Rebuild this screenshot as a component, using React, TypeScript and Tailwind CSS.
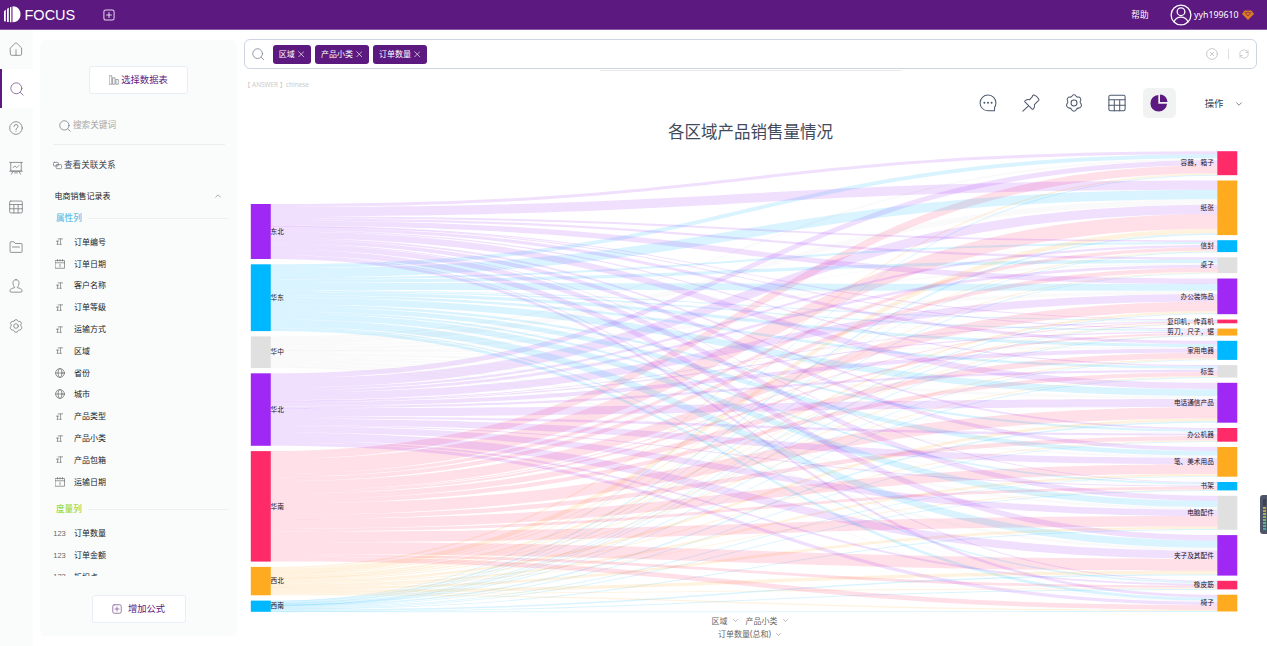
import React from "react";

type IconProps = { className?: string; children?: React.ReactNode };

function Icon({ className = "", children }: IconProps) {
  return (
    <svg
      viewBox="0 0 20 20"
      fill="none"
      stroke="currentColor"
      strokeWidth={1.15}
      strokeLinecap="round"
      strokeLinejoin="round"
      className={`shrink-0 ${className}`}
    >
      {children}
    </svg>
  );
}

const gear = (
  <>
    <path d="M7.6 2.6 Q8.2 .9 10 .9 Q11.800 .9 12.4 2.6 Q13 3.700 14.300 3.400 Q16 3 17 4.500 Q18.200 6.200 17.200 7.600 Q16.200 8.800 17.200 10 L17.700 10.700 Q18.800 12.300 17.900 14 Q17 15.700 15.200 15.700 Q13.400 15.600 12.900 16.900 Q12.200 19.100 10 19.100 Q7.800 19.100 7.100 16.900 Q6.600 15.600 4.800 15.700 Q3 15.700 2.100 14 Q1.200 12.300 2.300 10.700 L2.800 10 Q3.800 8.800 2.800 7.600 Q1.800 6.200 3 4.500 Q4 3 5.700 3.400 Q7 3.700 7.600 2.600 Z" />
    <circle cx="10" cy="10" r="3.3" />
  </>
);
const tableShape = (
  <>
    <rect x="1" y="1.500" width="18" height="17" rx="1.500" />
    <path d="M1 6.500H19M1 12.500H19M7 6.500V18.500M13 6.500V18.500" />
  </>
);
const lens = (
  <>
    <circle cx="9" cy="9" r="7.800" />
    <path d="M14.800 15 L18.800 18.800" />
  </>
);

function Lens({ className }: IconProps) {
  return <Icon className={className}>{lens}</Icon>;
}
function Chevron({ className, up = false }: { className?: string; up?: boolean }) {
  return (
    <Icon className={className}>
      <path strokeWidth={2.400} d={up ? "M2 14 L10 6 L18 14" : "M2 6 L10 14 L18 6"} />
    </Icon>
  );
}
function PlusBox({ className }: IconProps) {
  return (
    <Icon className={className}>
      <rect x="1.500" y="1.500" width="17" height="17" rx="3" strokeWidth={1.700} />
      <path strokeWidth={1.700} d="M10 6V14M6 10H14" />
    </Icon>
  );
}

const railIcons: { name: string; shape: React.ReactNode }[] = [
  { name: "home", shape: <path d="M2 8.500 L8.800 1.800 Q10 .800 11.200 1.800 L18 8.500 V17.500 Q18 19 16.500 19 H3.500 Q2 19 2 17.500 Z M10 11V19" /> },
  { name: "search", shape: lens },
  {
    name: "help",
    shape: (
      <>
        <circle cx="10" cy="10" r="9" />
        <path d="M7 8 Q7 5 10 5 Q13 5 13 7.700 Q13 9.300 11.200 10.200 Q10 10.900 10 12.300 M10 14.500V14.800" />
      </>
    ),
  },
  { name: "board", shape: <path d="M1 2H19M2.500 2V14.500H17.500V2M6 9.500L8.500 7L11 9.500L14 6.500M1 14.500H19M6 14.500L3.500 18.800M14 14.500L16.500 18.800M8 17H12" /> },
  { name: "table", shape: tableShape },
  { name: "folder", shape: <path d="M1.500 3.500 Q1.500 2.500 2.500 2.500 H6.800 L9 5 H17.500 Q18.700 5 18.700 6 V16.500 Q18.700 17.700 17.500 17.700 H2.700 Q1.500 17.700 1.500 16.500 Z M5 10H15" /> },
  { name: "user", shape: <path d="M10 1 C7 1 5.700 3 5.700 5.500 C5.700 8 6.500 10 8 11.500 V12.500 C5 13.200 1.300 13.500 1.300 17 Q1.300 18.800 3 18.800 H17 Q18.700 18.800 18.700 17 C18.700 13.500 15 13.200 12 12.500 V11.500 C13.500 10 14.300 8 14.300 5.500 C14.300 3 13 1 10 1 Z" /> },
  { name: "settings", shape: gear },
];

function Header() {
  return (
    <header className="flex h-[30px] shrink-0 items-center border-b border-[#8a59a3] bg-[#5c197f] text-white">
      <svg viewBox="0 0 17 17" className="ml-[3.500px] h-[17px] w-[17px]" fill="#fff">
        <path d="M0 5.500Q.900 4 1.800 3.800V15.500H.900Q0 15.500 0 14.800ZM3 3Q3.900 2 4.800 1.800V16H3ZM6 1.300L7.400 .700V16.300H6ZM8.500 .300C13.500 .300 16.500 3.800 16.500 8.300S13.500 16.300 8.500 16.300Z" />
      </svg>
      <span className="ml-[4px] w-[51px] pt-px font-['Liberation_Sans',sans-serif] text-[14.500px] leading-none">FOCUS</span>
      <PlusBox className="ml-[27px] h-[12px] w-[12px] text-[#e3d3ec]" />
      <div className="ml-auto flex items-center pr-[13px]">
        <span className="pt-px text-[8.600px]">帮助</span>
        <Icon className="ml-[21px] h-[22px] w-[22px]">
          <circle cx="10" cy="10" r="9" />
          <circle cx="10" cy="7" r="3.500" />
          <path d="M3.800 16 Q5.500 12 10 12 Q14.500 12 16.200 16" />
        </Icon>
        <span className="ml-[2.500px] w-[46px] pt-[2px] text-[8.800px]">yyh199610</span>
        <svg viewBox="0 0 12 10" className="ml-[2px] mt-px h-[10px] w-[12px]">
          <path d="M2.500 .500H9.500L12 4L6 10L0 4Z" fill="#dc7a24" />
          <path d="M3.200 2.800Q6 1.600 8.800 2.800L6 6Z" fill="none" stroke="#7c3250" strokeWidth=".8" />
        </svg>
      </div>
    </header>
  );
}

function Rail() {
  return (
    <nav className="flex w-[33px] shrink-0 flex-col bg-[#fafcfb]">
      {railIcons.map((item) => (
        <div
          key={item.name}
          className={`flex shrink-0 items-center justify-center border-l-2 pr-[2px] ${
            item.name === "home" ? "h-[38.800px]" : "h-[39.550px]"
          } ${
            item.name === "search" ? "border-[#5c197f] bg-white text-[#7b5590]" : "border-transparent pr-[3px] text-[#777b80]"
          }`}
        >
          <Icon className="h-[14px] w-[14px]">{item.shape}</Icon>
        </div>
      ))}
    </nav>
  );
}

type FieldKind = "text" | "date" | "geo" | "num";

function FieldIcon({ kind }: { kind: FieldKind }) {
  if (kind === "num") return <span className="text-[7.500px] font-['Liberation_Sans',sans-serif]">123</span>;
  if (kind === "date")
    return (
      <Icon className="h-[10px] w-[10px]">
        <path strokeWidth={1.300} d="M1 3H19V18.500H1ZM1 7.500H19M5 1V4M10 1V4M15 1V4M10 10.500V15.500" />
      </Icon>
    );
  if (kind === "geo")
    return (
      <Icon className="h-[10px] w-[10px]">
        <circle cx="10" cy="10" r="8.800" strokeWidth={1.400} />
        <ellipse cx="10" cy="10" rx="4" ry="8.800" strokeWidth={1.400} />
        <path strokeWidth={1.400} d="M1.200 10H18.800" />
      </Icon>
    );
  return (
    <Icon className="h-[7px] w-[7px]">
      <path strokeWidth={1.800} d="M6 2.500H19M13 2.500V18M10.500 18H15M1 9H8M4.500 9V18M3 18H7" />
    </Icon>
  );
}

function Field({ kind, label }: { kind: FieldKind; label: string }) {
  return (
    <div className="flex h-[21.800px] shrink-0 items-center text-[8px] text-[#222]">
      <div className="flex w-[12px] justify-center text-[#666]">
        <FieldIcon kind={kind} />
      </div>
      <span className="ml-[8.500px]">{label}</span>
    </div>
  );
}

const dimensions: [FieldKind, string][] = [
  ["text", "订单编号"],
  ["date", "订单日期"],
  ["text", "客户名称"],
  ["text", "订单等级"],
  ["text", "运输方式"],
  ["text", "区域"],
  ["geo", "省份"],
  ["geo", "城市"],
  ["text", "产品类型"],
  ["text", "产品小类"],
  ["text", "产品包箱"],
  ["date", "运输日期"],
];
const measures: [FieldKind, string][] = [
  ["num", "订单数量"],
  ["num", "订单金额"],
  ["num", "折扣点"],
];

function Panel() {
  return (
    <aside className="ml-[7px] mt-[10px] flex h-[596px] w-[197px] shrink-0 flex-col rounded-md bg-[#fafcfb]">
      <button className="mx-auto mt-[26px] flex h-[28px] w-[99px] shrink-0 items-center justify-center rounded-[3px] border border-[#e9edf5] bg-white text-[9.300px] text-[#5c197f]">
        <Icon className="mr-[2px] h-[10px] w-[10px] text-[#8a8a90]">
          <path strokeWidth={1.500} d="M1 1.500H5.500V18.500H1ZM8 5.500H12V18.500H8ZM14.500 9H18.500V18.500H14.500Z" />
        </Icon>
        选择数据表
      </button>
      <div className="ml-[13px] mt-[13px] flex h-[38px] w-[172px] shrink-0 items-center border-b border-[#eceeee] pl-[6px] text-[8.600px] text-[#a6a6a6]">
        <Lens className="mr-[2px] h-[12px] w-[12px] text-[#666e7c]" />
        搜索关键词
      </div>
      <div className="ml-[13px] flex h-[40px] shrink-0 items-center text-[8.600px] text-[#3c4657]">
        <Icon className="mr-[2px] h-[9px] w-[9px] text-[#777f8c]">
          <rect x="1" y="3" width="11" height="8" rx="2" strokeWidth={1.800} />
          <rect x="7" y="8" width="12" height="9" rx="2" strokeWidth={1.800} />
        </Icon>
        查看关联关系
      </div>
      <div className="ml-[14.500px] flex h-[21px] shrink-0 items-center justify-between pr-[16px] text-[8px] text-[#222]">
        电商销售记录表
        <Chevron up className="h-[6px] w-[6px] text-[#888]" />
      </div>
      <div className="flex h-[369.500px] shrink-0 flex-col overflow-hidden pl-[13.500px]">
        <div className="flex h-[24px] shrink-0 items-center pl-[2.500px] text-[8.600px] font-medium text-[#5fc0e6]">
          属性列<span className="ml-[6px] mr-[9px] h-px flex-1 bg-[#eef0f0]" />
        </div>
        <div className="flex flex-col pt-px">
          {dimensions.map(([kind, label]) => (
            <Field key={label} kind={kind} label={label} />
          ))}
        </div>
        <div className="mt-[4.500px] flex h-[24px] shrink-0 items-center pl-[2.500px] text-[8.600px] font-medium text-[#9ad94c]">
          度量列<span className="ml-[6px] mr-[9px] h-px flex-1 bg-[#eef0f0]" />
        </div>
        <div className="flex flex-col pt-[1.500px]">
          {measures.map(([kind, label]) => (
            <Field key={label} kind={kind} label={label} />
          ))}
        </div>
      </div>
      <button className="mx-auto mt-[19px] flex h-[28px] w-[94px] shrink-0 items-center justify-center rounded-[3px] border border-[#e9edf5] bg-white text-[9.300px] text-[#5c197f]">
        <PlusBox className="mr-[6px] h-[10px] w-[10px] text-[#8b6a9c]" />
        增加公式
      </button>
    </aside>
  );
}

function Tag({ label }: { label: string }) {
  return (
    <span className="mr-[4px] flex h-[19px] items-center rounded-[3px] bg-[#5c197f] px-[6.300px] text-[8px] text-white">
      {label}
      <Icon className="ml-[3px] h-[6.500px] w-[6.500px]">
        <path strokeWidth={2} d="M2 2L18 18M18 2L2 18" />
      </Icon>
    </span>
  );
}

function SearchBar() {
  return (
    <div className="mt-[9px] flex h-[30px] shrink-0 items-center rounded-[6px] border border-[#ccd5e1] bg-white pl-[7px] pr-[7px]">
      <Lens className="mr-[8px] h-[12.500px] w-[12.500px] text-[#6c7484]" />
      <Tag label="区域" />
      <Tag label="产品小类" />
      <Tag label="订单数量" />
      <Icon className="ml-auto h-[12px] w-[12px] text-[#c4c4c4]">
        <circle cx="10" cy="10" r="9" strokeWidth={1.500} />
        <path strokeWidth={1.500} d="M7 7L13 13M13 7L7 13" />
      </Icon>
      <span className="mx-[10px] h-[10px] w-px bg-[#dedede]" />
      <Icon className="h-[10px] w-[10px] text-[#c4c4c4]">
        <path strokeWidth={1.600} d="M1.500 11 Q1 5.500 5 3 Q10 0 15 3.500 L18 7M18 2.500V7H13.800M18.500 9 Q19 14.500 15 17 Q10 20 5 16.500L2 13M2 17.500V13H6.200" />
      </Icon>
    </div>
  );
}

function Toolbar() {
  return (
    <div className="flex h-[30px] shrink-0 items-center justify-end pr-[15.500px] text-[#4d596c]">
      <Icon className="h-[18px] w-[18px]">
        <path d="M16.500 18.700H10A8.800 8.800 0 1 1 18.800 10Q18.800 12.800 17.300 14.800V18.200Q17.300 18.700 16.500 18.700Z" />
        <path strokeWidth={2.200} d="M6 9.800H6.010M10 9.800H10.010M14 9.800H14.010" />
      </Icon>
      <Icon className="ml-[25px] h-[18px] w-[18px]">
        <path d="M11.800 1.800Q12.300 1 13.300 1.200Q16.500 2 18.600 5.500Q19.200 6.600 18.500 7.300L17.300 8.200L13.800 11.700Q14.600 14.500 12.500 16.800Q11.800 17.300 11.200 16.700L3.200 8.700Q2.700 8 3.500 7.400Q5.700 5.800 8.500 6.300L11.300 3.300ZM7.500 12.800L1 19" />
      </Icon>
      <Icon className="ml-[25px] h-[18px] w-[18px]">{gear}</Icon>
      <Icon className="ml-[25px] h-[18px] w-[18px]">{tableShape}</Icon>
      <div className="ml-[17px] flex h-[30px] w-[33px] items-center justify-center rounded-[5px] bg-[#f1f3f2]">
        <svg viewBox="0 0 18 18" className="h-[18px] w-[18px]" fill="#5c197f">
          <path d="M8.300 1A8.300 8.300 0 1 0 17 9.700H8.300Z" />
          <path d="M10 .500V8H17.500A7.500 7.500 0 0 0 10 .500Z" />
        </svg>
      </div>
      <span className="ml-[29px] pt-px text-[9.400px] text-[#333d4d]">操作</span>
      <Chevron className="ml-[12px] mt-px h-[6px] w-[6px]" />
    </div>
  );
}

const PURPLE = "#a028f5";
const CYAN = "#00b8ff";
const SILVER = "#e0e0e0";
const ROSE = "#ff2a68";
const AMBER = "#ffab20";

type ChartNode = { name: string; top: number; size: number; color: string };

const regions: ChartNode[] = [
  { name: "东北", top: 204, size: 55, color: PURPLE },
  { name: "华东", top: 264.300, size: 66.800, color: CYAN },
  { name: "华中", top: 336.400, size: 31.600, color: SILVER },
  { name: "华北", top: 373.300, size: 72.500, color: PURPLE },
  { name: "华南", top: 451.100, size: 110.500, color: ROSE },
  { name: "西北", top: 566.900, size: 28.400, color: AMBER },
  { name: "西南", top: 600.600, size: 11.200, color: CYAN },
];

// Each product row lists its share per region, in the order of `regions`.
const products: (ChartNode & { parts: number[] })[] = [
  { name: "容器，箱子", top: 151.200, size: 24, color: ROSE, parts: [3, 4, 2, 5, 8, 1.500, 0.400] },
  { name: "纸张", top: 180.500, size: 54.600, color: AMBER, parts: [9, 9.500, 5.700, 9.300, 14.700, 4.500, 1.600] },
  { name: "信封", top: 240.200, size: 11.900, color: CYAN, parts: [1.800, 2, 1, 2.200, 3.500, 1, 0.500] },
  { name: "桌子", top: 257.300, size: 15.900, color: SILVER, parts: [2.200, 3.300, 2, 2.700, 4, 1, 0.500] },
  { name: "办公装饰品", top: 278.500, size: 35.700, color: PURPLE, parts: [5.300, 7, 3.200, 7.500, 9.700, 2, 1] },
  { name: "复印机，传真机", top: 319.600, size: 3.700, color: ROSE, parts: [0.400, 0.800, 0.400, 0.600, 1, 0.300, 0.100] },
  { name: "剪刀，尺子，锯", top: 328.600, size: 7, color: AMBER, parts: [1, 1.400, 0.500, 1.200, 2, 0.600, 0.300] },
  { name: "家用电器", top: 340.800, size: 19.100, color: CYAN, parts: [3, 3.200, 1.700, 4, 5.700, 1.200, 0.500] },
  { name: "标签", top: 365.100, size: 12.400, color: SILVER, parts: [1.200, 2.500, 1, 2.200, 4, 1, 0.400] },
  { name: "电话通信产品", top: 382.800, size: 39.900, color: PURPLE, parts: [6.300, 7, 3, 8, 11.700, 2.500, 1.500] },
  { name: "办公机器", top: 428, size: 13.700, color: ROSE, parts: [1.700, 2.300, 1.500, 2.400, 4.300, 1, 0.500] },
  { name: "笔、美术用品", top: 447, size: 29.700, color: AMBER, parts: [3.800, 4.800, 2.400, 6.300, 9.600, 2, 0.800] },
  { name: "书架", top: 482, size: 8.400, color: CYAN, parts: [0.800, 1.800, 1, 1, 2.800, 0.600, 0.300] },
  { name: "电脑配件", top: 495.800, size: 34, color: SILVER, parts: [5, 6.200, 2.800, 6.300, 10.500, 2.400, 0.800] },
  { name: "夹子及其配件", top: 535.100, size: 40.500, color: PURPLE, parts: [5.500, 7.200, 3, 8, 12.300, 3.200, 1.500] },
  { name: "橡皮筋", top: 580.800, size: 8.600, color: ROSE, parts: [1, 1.500, 0.500, 1.800, 2.600, 0.800, 0.400] },
  { name: "椅子", top: 594.700, size: 16.800, color: AMBER, parts: [2.800, 3, 1.200, 3.300, 4.800, 1.200, 0.400] },
];

// Scale rows and columns in turn until the ribbons fill both sets of bars.
function fitRibbons(): number[][] {
  const m = products.map((p) => [...p.parts]);
  for (let pass = 0; pass < 12; pass++) {
    regions.forEach((r, c) => {
      const sum = m.reduce((s, row) => s + row[c], 0);
      m.forEach((row) => (row[c] *= r.size / sum));
    });
    products.forEach((p, i) => {
      const sum = m[i].reduce((s, v) => s + v, 0);
      m[i] = m[i].map((v) => (v * p.size) / sum);
    });
  }
  return m;
}

const X1 = 270.800;
const X2 = 1217.300;
const XM = (X1 + X2) / 2;

function buildRibbons() {
  const m = fitRibbons();
  const left = regions.map((r) => r.top);
  const out: { key: string; d: string; color: string }[] = [];
  products.forEach((p, i) => {
    let right = p.top;
    regions.forEach((r, c) => {
      const h = m[i][c];
      const a = left[c];
      const b = right;
      // Hairline ribbons keep a minimum drawn thickness so they stay visible.
      const t = Math.max(h, 0.9);
      out.push({
        key: `${r.name}-${p.name}`,
        color: r.color,
        d: `M${X1} ${a}C${XM} ${a} ${XM} ${b} ${X2} ${b}V${b + t}C${XM} ${b + t} ${XM} ${a + t} ${X1} ${a + t}Z`,
      });
      left[c] += h;
      right += h;
    });
  });
  return out;
}

const ribbons = buildRibbons();

function Sankey() {
  return (
    <svg viewBox="244 146 1013 467" className="h-[467px] w-[1013px] shrink-0">
      {ribbons.map((r) => (
        <path key={r.key} d={r.d} fill={r.color} fillOpacity={0.15} />
      ))}
      {regions.map((n) => (
        <rect key={n.name} x={250.800} y={n.top} width={20} height={n.size} fill={n.color} />
      ))}
      {products.map((n) => (
        <rect key={n.name} x={1217.300} y={n.top} width={20} height={n.size} fill={n.color} />
      ))}
      <g fontSize={6.650} fill="#1c1424">
        {regions.map((n) => (
          <text key={n.name} x={270.600} y={n.top + n.size / 2 + 2.200}>
            {n.name}
          </text>
        ))}
        {products.map((n) => (
          <text key={n.name} x={1213.800} y={n.top + n.size / 2 + 2.200} textAnchor="end">
            {n.name}
          </text>
        ))}
      </g>
    </svg>
  );
}

function AxisPicker({ label }: { label: string }) {
  return (
    <span className="flex items-center">
      {label}
      <Chevron className="ml-[5px] h-[5px] w-[5px] text-[#888]" />
    </span>
  );
}

function SideWidget() {
  return (
    <div className="absolute right-0 top-[495px] flex h-[39px] w-[7px] flex-col items-center justify-center gap-px rounded-l-[3px] bg-[#50566a] pl-[2px]">
      <span className="h-[7px] w-[3px] bg-[#3c4254]" />
      <span className="h-[2px] w-[3px] bg-[#b9a74e]" />
      <span className="h-[2px] w-[3px] bg-[#b9a74e]" />
      <span className="h-[2px] w-[3px] bg-[#a9b35a]" />
      <span className="h-[2px] w-[3px] bg-[#8fb765]" />
      <span className="h-[2px] w-[3px] bg-[#79b873]" />
      <span className="h-[2px] w-[3px] bg-[#66b585]" />
      <span className="h-[2px] w-[3px] bg-[#58b096]" />
      <span className="h-[2px] w-[3px] bg-[#4fa99c]" />
    </div>
  );
}

export default function App() {
  return (
    <div className="relative flex h-[646px] w-[1267px] flex-col overflow-hidden bg-white font-['Noto_Sans','Noto_Sans_CJK_SC',sans-serif] leading-none">
      <Header />
      <div className="flex min-h-0 flex-1">
        <Rail />
        <Panel />
        <main className="ml-[7px] flex w-[1013px] flex-col">
          <SearchBar />
          <div className="ml-[356px] mt-px h-px w-[302px] shrink-0 bg-[#e8eaec]" />
          <div className="mt-[10px] flex h-[8px] shrink-0 items-center text-[6.400px] text-[#cbcbcb]">
            <span className="whitespace-pre">【 ANSWER 】chinese</span>
          </div>
          <div className="-mt-px flex shrink-0 flex-col">
            <Toolbar />
          </div>
          <h1 className="flex h-[28px] shrink-0 items-center justify-center text-[16.500px] text-[#414b5c]">各区域产品销售量情况</h1>
          <Sankey />
          <div className="flex shrink-0 flex-col items-center pr-[2px] text-[8px] text-[#666]">
            <div className="mt-px flex h-[13px] items-center gap-[8px]">
              <AxisPicker label="区域" />
              <AxisPicker label="产品小类" />
            </div>
            <div className="flex h-[14px] items-center">
              <AxisPicker label="订单数量(总和)" />
            </div>
          </div>
        </main>
      </div>
      <SideWidget />
    </div>
  );
}
